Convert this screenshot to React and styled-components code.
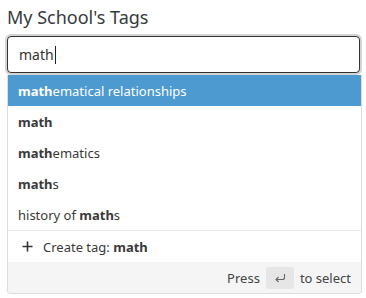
import React from 'react';
import styled, { createGlobalStyle } from 'styled-components';

const Global = createGlobalStyle`
  body {
    margin: 0;
    background: #fff;
    font-family: 'Noto Sans', 'Open Sans', sans-serif;
    color: #333;
  }
`;

const Wrapper = styled.div`
  padding: 5px 6px 0 7px;
  width: 366px;
  box-sizing: border-box;
`;

const Title = styled.h2`
  margin: 0 0 5px;
  font-size: 18px;
  font-weight: 400;
  line-height: 24px;
  color: #363b40;
`;

const InputRing = styled.div`
  margin: 0 -2px;
  padding: 2px;
  border-radius: 6px;
  background: #d4d4d4;
`;

const Input = styled.div`
  height: 35px;
  border: 1px solid #333;
  border-radius: 4px;
  background: #fff;
  display: flex;
  align-items: center;
  padding-left: 11px;
  font-size: 14px;
  color: #333;
`;

const Caret = styled.span`
  display: inline-block;
  width: 1px;
  height: 18px;
  background: #222;
  margin-left: 1px;
`;

const Menu = styled.div`
  width: 353px;
  border: 1px solid #dcdcdc;
  border-top: none;
  border-radius: 0 0 4px 4px;
  overflow: hidden;
`;

const Option = styled.div`
  height: 31px;
  display: flex;
  align-items: center;
  padding-left: 10px;
  font-size: 13px;
  color: ${(p) => (p.active ? '#fff' : '#3a3a3a')};
  background: ${(p) => (p.active ? '#4d9ad1' : '#fff')};
  b {
    font-weight: 700;
  }
`;

const CreateRow = styled.div`
  height: 31px;
  border-top: 1px solid #e6e6e6;
  display: flex;
  align-items: center;
  padding-left: 14px;
  gap: 10px;
  font-size: 13px;
  color: #3a3a3a;
`;

const Footer = styled.div`
  height: 31px;
  background: #f5f5f5;
  display: flex;
  align-items: center;
  justify-content: flex-end;
  padding-right: 10px;
  gap: 6px;
  font-size: 13px;
  color: #444;
`;

const Key = styled.span`
  width: 28px;
  height: 22px;
  border-radius: 3px;
  background: #e6e6e6;
  display: flex;
  align-items: center;
  justify-content: center;
`;

const Plus = () => (
  <svg width="11" height="11" viewBox="0 0 11 11">
    <path d="M5.5 0.5v10M0.5 5.5h10" stroke="#333" strokeWidth="1.6" />
  </svg>
);

const Enter = () => (
  <svg width="12" height="10" viewBox="0 0 12 10">
    <path d="M10.5 1v3.5a2 2 0 0 1-2 2H2M4.5 4L2 6.5 4.5 9" fill="none" stroke="#666" strokeWidth="1.1" />
  </svg>
);

const options = [
  ['', 'math', 'ematical relationships'],
  ['', 'math', ''],
  ['', 'math', 'ematics'],
  ['', 'math', 's'],
  ['history of ', 'math', 's'],
];

const App = () => (
  <>
    <Global />
    <Wrapper>
      <Title>My School's Tags</Title>
      <InputRing>
        <Input>
          math
          <Caret />
        </Input>
      </InputRing>
      <Menu>
        {options.map(([pre, hit, post], i) => (
          <Option key={i} active={i === 0}>
            <span>
              {pre}
              <b>{hit}</b>
              {post}
            </span>
          </Option>
        ))}
        <CreateRow>
          <Plus />
          <span>
            Create tag: <b>math</b>
          </span>
        </CreateRow>
        <Footer>
          Press
          <Key>
            <Enter />
          </Key>
          to select
        </Footer>
      </Menu>
    </Wrapper>
  </>
);

export default App;
